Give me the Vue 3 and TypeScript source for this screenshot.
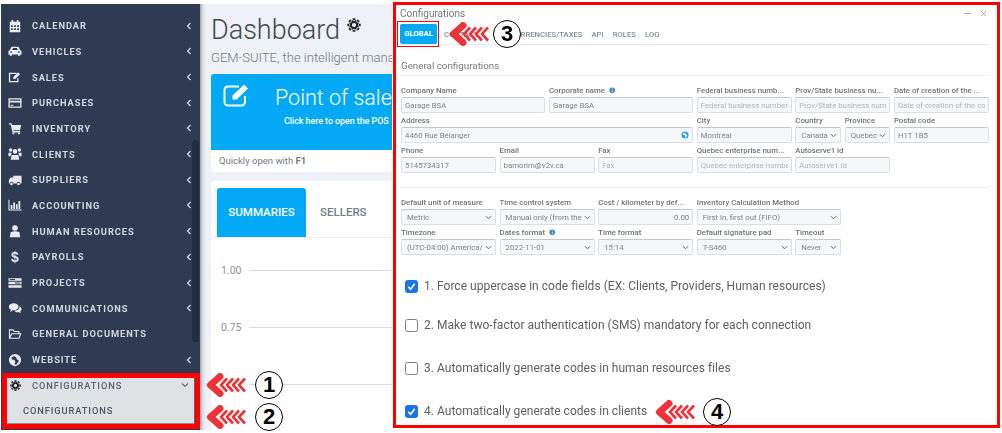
<script setup lang="ts">
function circle(cx: number, cy: number, r: number): string {
  return `M${cx - r} ${cy}a${r} ${r} 0 1 0 ${2 * r} 0a${r} ${r} 0 1 0 ${-2 * r} 0z`
}
function gear(): string {
  let d = ''
  const c = 8
  for (let i = 0; i < 8; i++) {
    const a = (i * Math.PI) / 4
    const p = (r: number, o: number) => `${(c + r * Math.cos(a + o)).toFixed(2)} ${(c + r * Math.sin(a + o)).toFixed(2)}`
    d += `M${p(5, -0.3)}L${p(7.8, -0.2)}L${p(7.8, 0.2)}L${p(5, 0.3)}z`
  }
  return d + circle(8, 8, 5.6) + circle(8, 8, 2.4)
}
const icons: Record<string, string> = {
  calendar: 'M2 3h2V1h2v2h4V1h2v2h2v12H2zM3.500 7v2h2V7zM7 7v2h2V7zM10.500 7v2h2V7zM3.500 10.500v2h2v-2zM7 10.500v2h2v-2zM10.500 10.500v2h2v-2z',
  car: 'M0.500 8l1.500-1 2-4h8l2 4 1.500 1v4h-1.500v1.500h-2.500V12H4.500v1.500H2V12H0.500zM4.800 6.800h6.400l-1-2.300H5.800zM2.500 8.500v1.500h2V8.500zM11.500 8.500v1.500h2V8.500z',
  edit: 'M1 3h8.500v1.500h-7v8h8V9.500H12V14H1zM6 8l5.500-5.500 2.300 2.300L8.300 10.300H6z',
  card: 'M0.500 2.500h15v11h-15zM2 7.500v4.500h12V7.500zM2 4v1.500h12V4zM3 10h3v1H3z',
  cart: 'M1 2.500h3l.6 2H15l-1.200 6H6.200l.3 1H14v1.500H5.200L3 4H1z' + circle(6.200, 14, 1.300) + circle(12.500, 14, 1.300),
  users: circle(8, 5, 2.600) + circle(3, 3.500, 2) + circle(13, 3.500, 2) + 'M4 9h8l.8 5.500H3.200zM0.500 6.500h3.300l.3 1.500-1.600 2.500H0.500zM15.500 6.500h-3.300l-.3 1.500 1.600 2.500h2z',
  truck: 'M1 8l2-3h3V3h9.500v9H14a2 2 0 0 0-4 0H6a2 2 0 0 0-4 0H1z' + circle(4, 12.500, 1.500) + circle(12, 12.500, 1.500),
  chart: 'M0.500 2h1.200v11h13.800v1.200H0.500zM3 8h2v4.500H3zM6 5h2v7.500H6zM9 7h2v5.500H9zM12 3.500h2v9h-2z',
  user: circle(8, 4.500, 3.200) + 'M3 9.500q5-2.500 10 0l1 5.500H2z',
  projects: 'M0.500 2.500h15v3h-15zM0.500 6.500h15v3h-15zM0.500 10.500h15v3h-15zM8 7.500v1h6v-1zM2 3.500v1h6v-1z',
  comments: 'M1 6.500C1 4 3.500 2.500 6.500 2.500S12 4 12 6.500 9.500 10.500 6.500 10.500l-1 0L2.500 12.500l.8-2.700C1.800 9 1 8 1 6.500zM13 6c1.500.8 2.500 2 2.500 3.500 0 1-.6 2-1.500 2.600l.6 2-2.600-1.400c-2 .3-3.600-.2-4.500-1.700 3.500 0 6-2 5.500-5z',
  folder: 'M1 2.500h5l1.500 2H13v2.500h2.500L13 13.500H1zM2.200 4v5.500L4 7h7.800V5.800H6.800L5.400 4zM4.700 8.200l-2.100 4h9.600l1.500-4z',
  globe: circle(8, 8, 7) + 'M7 3.500l-3 1.500.5 2.500 3 .5 1 2.500-1 2.500 2 .5 2-3 1-2-2.500-1.500-.5-2z',
  gear: gear()
}
type Row = { icon: string; label: string; dollar?: boolean; noArrow?: boolean }
const menu: Row[] = [
  { icon: 'calendar', label: 'CALENDAR' },
  { icon: 'car', label: 'VEHICLES' },
  { icon: 'edit', label: 'SALES' },
  { icon: 'card', label: 'PURCHASES' },
  { icon: 'cart', label: 'INVENTORY' },
  { icon: 'users', label: 'CLIENTS' },
  { icon: 'truck', label: 'SUPPLIERS' },
  { icon: 'chart', label: 'ACCOUNTING' },
  { icon: 'user', label: 'HUMAN RESOURCES' },
  { icon: '', label: 'PAYROLLS', dollar: true },
  { icon: 'projects', label: 'PROJECTS' },
  { icon: 'comments', label: 'COMMUNICATIONS' },
  { icon: 'folder', label: 'GENERAL DOCUMENTS', noArrow: true },
  { icon: 'globe', label: 'WEBSITE' }
]
type Field = { label: string; value?: string; ph?: string; span: number; select?: boolean; info?: boolean; globe?: boolean; right?: boolean; nl?: boolean }
const general: Field[] = [
  { label: 'Company Name', value: 'Garage BSA', span: 3 },
  { label: 'Corporate name', value: 'Garage BSA', span: 3, info: true },
  { label: 'Federal business numb...', ph: 'Federal business number', span: 2 },
  { label: 'Prov/State business nu...', ph: 'Prov/State business numl', span: 2 },
  { label: 'Date of creation of the ...', ph: 'Date of creation of the co', span: 2 },
  { label: 'Address', value: '4460 Rue Bélanger', span: 6, globe: true },
  { label: 'City', value: 'Montréal', span: 2 },
  { label: 'Country', value: 'Canada', span: 1, select: true },
  { label: 'Province', value: 'Quebec', span: 1, select: true },
  { label: 'Postal code', value: 'H1T 1B5', span: 2 },
  { label: 'Phone', value: '5145734317', span: 2 },
  { label: 'Email', value: 'bamorim@v2v.ca', span: 2 },
  { label: 'Fax', ph: 'Fax', span: 2 },
  { label: 'Quebec enterprise num...', ph: 'Quebec enterprise numbe', span: 2 },
  { label: 'Autoserve1 id', ph: 'Autoserve1 id', span: 2 }
]
const prefs: Field[] = [
  { label: 'Default unit of measure', value: 'Metric', span: 2, select: true },
  { label: 'Time control system', value: 'Manual only (from the', span: 2, select: true },
  { label: 'Cost / kilometer by def...', value: '0.00', span: 2, right: true },
  { label: 'Inventory Calculation Method', value: 'First in, first out (FIFO)', span: 3, select: true },
  { label: 'Timezone', value: '(UTC-04:00) America/I', span: 2, select: true, nl: true },
  { label: 'Dates format', value: '2022-11-01', span: 2, select: true, info: true },
  { label: 'Time format', value: '15:14', span: 2, select: true },
  { label: 'Default signature pad', value: 'T-S460', span: 2, select: true },
  { label: 'Timeout', value: 'Never', span: 1, select: true }
]
const checks = [
  { text: '1. Force uppercase in code fields (EX: Clients, Providers, Human resources)', on: true },
  { text: '2. Make two-factor authentication (SMS) mandatory for each connection', on: false },
  { text: '3. Automatically generate codes in human resources files', on: false },
  { text: '4. Automatically generate codes in clients', on: true }
]
const tabs = ['CONTACT', 'CURRENCIES/TAXES', 'API', 'ROLES', 'LOG']
const marks = [
  { n: 1, cls: 'm1' },
  { n: 2, cls: 'm2' },
  { n: 3, cls: 'm3' },
  { n: 4, cls: 'm4' }
]
const arrowX = [21, 27, 33, 39]
</script>

<template>
  <div class="page">
    <aside class="side">
      <div v-for="m in menu" :key="m.label" class="row">
        <span v-if="m.dollar" class="dollar">$</span>
        <svg v-else class="ico" viewBox="0 0 16 16"><path :d="icons[m.icon]" fill-rule="evenodd" /></svg>
        <span class="lbl">{{ m.label }}</span>
        <svg v-if="!m.noArrow" class="chev" viewBox="0 0 6 8"><path d="M4.500 1L1.500 4l3 3" /></svg>
      </div>
      <div class="cfg">
        <div class="cfg-row">
          <svg class="ico dark" viewBox="0 0 16 16"><path :d="icons.gear" fill-rule="evenodd" /></svg>
          <span class="lbl">CONFIGURATIONS</span>
          <svg class="chev down" viewBox="0 0 8 6"><path d="M1 1.500l3 3 3-3" /></svg>
        </div>
        <div class="cfg-sub">CONFIGURATIONS</div>
      </div>
      <div class="scroll"></div>
    </aside>

    <main class="main">
      <h1 class="title">Dashboard<svg class="title-gear" viewBox="0 0 16 16"><path :d="icons.gear" fill-rule="evenodd" /></svg></h1>
      <p class="sub">GEM-SUITE, the intelligent management software</p>
      <section class="pos">
        <div class="pos-top">
          <svg class="pos-ico" viewBox="0 0 28 24"><path d="M22 13v6a3.500 3.500 0 0 1-3.500 3.500H5A3.500 3.500 0 0 1 1.500 19V7A3.500 3.500 0 0 1 5 3.500h11" class="pos-line" /><path d="M9 17v-4.500L21 1l4.500 4.500L13.500 17z" class="pos-pen" /></svg>
          <div class="pos-txt">
            <div class="pos-head">Point of sale</div>
            <div class="pos-link">Click here to open the POS</div>
          </div>
        </div>
        <div class="pos-foot">Quickly open with <b>F1</b></div>
      </section>
      <section class="stats">
        <div class="stats-tabs">
          <span class="stab on">SUMMARIES</span>
          <span class="stab">SELLERS</span>
        </div>
        <div class="chart">
          <div class="cline"><span>1.00</span><i></i></div>
          <div class="cline"><span>0.75</span><i></i></div>
          <div class="cline"><span></span><i></i></div>
        </div>
      </section>
    </main>

    <section class="win">
      <header class="win-head">
        <span>Configurations</span>
        <span class="win-btns">
          <svg viewBox="0 0 8 8"><path d="M0 4h8" /></svg>
          <svg viewBox="0 0 8 8"><path d="M1 1l6 6M7 1L1 7" /></svg>
        </span>
      </header>
      <nav class="tabs">
        <span class="tab-on">GLOBAL</span>
        <span v-for="t in tabs" :key="t" class="tab">{{ t }}</span>
      </nav>
      <h2 class="sect">General configurations</h2>
      <div class="grid">
        <div v-for="f in general" :key="f.label" class="field" :class="'s' + f.span">
          <label>{{ f.label }}<svg v-if="f.info" class="info" viewBox="0 0 8 8"><circle cx="4" cy="4" r="3.500" /><path d="M3.500 3.300h1v3h-1zM3.500 1.700h1v1h-1z" /></svg></label>
          <div class="inp" :class="{ ph: f.ph, sel: f.select }">
            <span>{{ f.value || f.ph }}</span>
            <svg v-if="f.select" class="caret" viewBox="0 0 8 6"><path d="M1 1.500l3 3 3-3" /></svg>
            <svg v-if="f.globe" class="globe" viewBox="0 0 16 16"><path :d="icons.globe" fill-rule="evenodd" /></svg>
          </div>
        </div>
      </div>
      <div class="grid second">
        <div v-for="f in prefs" :key="f.label" class="field" :class="['s' + f.span, { nl: f.nl }]">
          <label>{{ f.label }}<svg v-if="f.info" class="info" viewBox="0 0 8 8"><circle cx="4" cy="4" r="3.500" /><path d="M3.500 3.300h1v3h-1zM3.500 1.700h1v1h-1z" /></svg></label>
          <div class="inp" :class="{ sel: f.select, right: f.right }">
            <span>{{ f.value }}</span>
            <svg v-if="f.select" class="caret" viewBox="0 0 8 6"><path d="M1 1.500l3 3 3-3" /></svg>
          </div>
        </div>
      </div>
      <div class="checks">
        <div v-for="c in checks" :key="c.text" class="check">
          <span class="box" :class="{ on: c.on }">
            <svg v-if="c.on" viewBox="0 0 12 12"><path d="M2.500 6.500l2.500 2.500 4.500-6" /></svg>
          </span>
          <span>{{ c.text }}</span>
        </div>
      </div>
      <div class="tab-mark"></div>
    </section>

    <div v-for="m in marks" :key="m.n" class="mark" :class="m.cls">
      <svg class="arrow" viewBox="0 0 42 24">
        <path class="head" d="M14 3.500L4.500 12l9.500 8.500" />
        <path v-for="x in arrowX" :key="x" class="tail" :d="`M${x} 5.500l-6 6.500 6 6.500`" />
      </svg>
      <span class="num">{{ m.n }}</span>
    </div>
  </div>
</template>

<style>
html, body { margin: 0; background: #fff; }
</style>

<style scoped>
.page {
  width: 1002px;
  height: 433px;
  position: relative;
  overflow: hidden;
  display: flex;
  align-items: flex-start;
  padding-top: 4px;
  box-sizing: border-box;
  font-family: Roboto, "Liberation Sans", sans-serif;
}
.side {
  width: 199px;
  height: 426px;
  margin-left: 1px;
  flex: none;
  box-sizing: border-box;
  background: #2e3b52;
  padding-top: 8.800px;
  position: relative;
  color: #dde1e8;
}
.row {
  height: 25.700px;
  display: flex;
  align-items: center;
  padding-left: 7px;
  filter: blur(0.3px);
}
.ico { width: 14px; height: 14px; flex: none; fill: #e8ebef; }
.dollar { width: 14px; flex: none; text-align: center; font: 700 14px "Liberation Sans", sans-serif; color: #e8ebef; }
.lbl {
  margin-left: 10px;
  font-size: 9.300px;
  font-weight: 700;
  letter-spacing: 0.950px;
  white-space: nowrap;
  color: #d3d8e0;
}
.chev { width: 6px; height: 8px; margin-left: auto; margin-right: 8px; flex: none; fill: none; stroke: #d9dde4; stroke-width: 1.200; }
.chev.down { width: 8px; height: 6px; margin-right: 6px; stroke: #666b75; }
.cfg {
  position: absolute;
  left: 1px;
  top: 369px;
  width: 198px;
  height: 56px;
  box-sizing: border-box;
  border: 5px solid #f00;
  background: #dfe2e5;
  box-shadow: inset -1px 0 0 #5a6474, inset 0 -1px 0 #8a909a;
}
.cfg-row {
  height: 14px;
  display: flex;
  align-items: center;
  padding-left: 3px;
  filter: blur(0.3px);
}
.cfg-row .ico { width: 11px; height: 11px; }
.cfg-row .lbl { margin-left: 11px; color: #5a6270; font-weight: 500; letter-spacing: 0.900px; }
.dark { fill: #15181d; }
.cfg-sub {
  margin: 12px 0 0 16px;
  height: 14px;
  line-height: 14px;
  font-size: 9.300px;
  font-weight: 500;
  letter-spacing: 0.900px;
  color: #4d5463;
  filter: blur(0.3px);
}
.scroll {
  position: absolute;
  left: 191px;
  top: 136px;
  width: 7px;
  height: 202px;
  border-radius: 4px;
  background: #222c3e;
}
.main {
  width: 192px;
  height: 426px;
  flex: none;
  box-sizing: border-box;
  background: linear-gradient(90deg, #a4a9b0 0, #dfe2e6 3px, #eef1f5 6px);
  padding: 0 0 0 11px;
  overflow: hidden;
}
.title {
  margin: 10px 0 0;
  font-size: 27px;
  font-weight: 300;
  line-height: 32px;
  color: #3f4750;
  white-space: nowrap;
  position: relative;
}
.title-gear { width: 14px; height: 14px; margin: 0 0 14px 7px; fill: #23262b; vertical-align: middle; }
.sub {
  margin: 3px 0 0;
  font-size: 13px;
  font-weight: 300;
  line-height: 18px;
  color: #6f7985;
  white-space: nowrap;
}
.pos {
  margin-top: 7px;
  width: 260px;
  height: 98px;
  background: #fff;
  border-radius: 3px;
  overflow: hidden;
}
.pos-top {
  height: 76px;
  background: #03a9f4;
  display: flex;
  color: #fff;
}
.pos-ico { width: 28px; height: 24px; margin: 9px 0 0 12px; flex: none; }
.pos-line { fill: none; stroke: #fff; stroke-width: 2; }
.pos-pen { fill: #fff; stroke: #03a9f4; stroke-width: 1; }
.pos-txt { margin-left: 24px; }
.pos-head { font-size: 21.500px; font-weight: 300; line-height: 30px; margin-top: 9px; white-space: nowrap; }
.pos-link { font-size: 8.800px; font-weight: 500; margin: 1px 0 0 9px; white-space: nowrap; line-height: 14px; }
.pos-foot { padding-left: 8px; line-height: 22px; font-size: 9.500px; color: #74797f; }
.pos-foot b { font-weight: 700; }
.stats {
  margin-top: 9px;
  width: 260px;
  height: 260px;
  background: #fff;
  border-radius: 3px;
}
.stats-tabs {
  display: flex;
  height: 57px;
  padding: 7px 0 0 6px;
  box-sizing: border-box;
  border-bottom: 1px solid #eee;
}
.stab {
  width: 89px;
  height: 49px;
  line-height: 49px;
  text-align: center;
  font-size: 11.500px;
  font-weight: 500;
  color: #6f7f88;
  white-space: nowrap;
  flex: none;
}
.stab + .stab { width: auto; margin-left: 14px; }
.stab.on { background: #03a9f4; color: #fff; border-radius: 3px 3px 0 0; }
.chart { padding: 4px 0 0 10px; }
.cline {
  height: 57px;
  display: flex;
  align-items: center;
  font-size: 10.500px;
  color: #8a8f95;
}
.cline span { width: 28px; flex: none; }
.cline i { flex: 1; height: 1px; background: #dcdcdc; }
.win {
  position: absolute;
  left: 393px;
  top: 2px;
  width: 607px;
  height: 426px;
  box-sizing: border-box;
  border: 3px solid #f00;
  background: #fff;
  padding: 0 7px 0 4px;
  color: #6e7278;
}
.win-head {
  height: 16px;
  display: flex;
  justify-content: space-between;
  align-items: center;
  font-size: 10px;
  margin-bottom: 3px;
  color: #74787d;
  filter: blur(0.3px);
}
.win-btns { display: flex; gap: 9px; align-items: center; margin-right: 3px; }
.win-btns svg { width: 7px; height: 7px; fill: none; stroke: #a5a8ac; stroke-width: 1; }
.tabs {
  display: flex;
  align-items: flex-end;
  height: 21px;
  box-sizing: border-box;
  border-bottom: 1px solid #e8e9eb;
  font-size: 7.700px;
  font-weight: 500;
  color: #78909c;
  line-height: 19px;
  filter: blur(0.3px);
}
.tab-on {
  width: 37px;
  height: 20px;
  line-height: 20px;
  margin-left: 0;
  text-align: center;
  background: #03a9f4;
  color: #fff;
  font-weight: 700;
  border-radius: 2px;
  flex: none;
}
.tab { margin-left: 9px; white-space: nowrap; }
.tab:nth-child(2) { margin-left: 7px; width: 57.500px; overflow: hidden; }
.sect {
  margin: 0;
  height: 31px;
  padding: 11px 0 0 1px;
  line-height: 20px;
  font-size: 9.800px;
  font-weight: 400;
  color: #74787d;
  border-bottom: 1px solid #eef0f1;
  box-sizing: border-box;
  filter: blur(0.3px);
}
.grid {
  display: grid;
  grid-template-columns: repeat(12, 1fr);
  column-gap: 3.500px;
  row-gap: 2px;
  width: 588px;
  margin: 9px 0 0 1px;
  filter: blur(0.3px);
}
.second {
  border-top: 1px solid #eef0f1;
  margin-top: 14px;
  padding-top: 9px;
}
.s1 { grid-column: span 1; }
.s2 { grid-column: span 2; }
.s3 { grid-column: span 3; }
.s6 { grid-column: span 6; }
.nl { grid-column: 1 / span 2; }
.field { min-width: 0; }
.field label {
  display: block;
  height: 12px;
  line-height: 12px;
  font-size: 7.800px;
  font-weight: 500;
  color: #6f7379;
  white-space: nowrap;
  overflow: hidden;
}
.info { width: 6.500px; height: 6.500px; margin-left: 4px; fill: #3b82c4; }
.info path { fill: #fff; }
.inp {
  height: 16px;
  box-sizing: border-box;
  border: 1px solid #dcdfe2;
  border-top-color: #c6c9cc;
  border-radius: 2px;
  background: #f6f7f8;
  display: flex;
  align-items: center;
  padding: 0 3px;
  font-size: 7.800px;
  color: #7d8288;
  white-space: nowrap;
  overflow: hidden;
  position: relative;
}
.inp span { overflow: hidden; flex: 1; }
.inp.ph { color: #b0b4b8; }
.inp.sel { padding-left: 5px; }
.inp.right span { text-align: right; }
.caret { width: 7px; height: 5px; flex: none; fill: none; stroke: #5b6066; stroke-width: 1.200; margin-left: 2px; }
.globe { width: 8px; height: 8px; flex: none; fill: #1fa2e8; }
.checks { margin: 24px 0 0 5px; filter: blur(0.25px); }
.check {
  display: flex;
  align-items: center;
  height: 14px;
  font-size: 12px;
  letter-spacing: 0.030px;
  color: #5c6064;
  white-space: nowrap;
}
.check + .check { margin-top: 25px; }
.check:nth-child(3), .check:nth-child(4) { margin-top: 29px; }
.box {
  width: 13px;
  height: 13px;
  box-sizing: border-box;
  border: 1px solid #7c7f83;
  border-radius: 2.500px;
  margin-right: 6px;
  flex: none;
  background: #fff;
}
.box.on { background: #1a73e8; border-color: #1a73e8; }
.box svg { display: block; width: 11px; height: 11px; fill: none; stroke: #fff; stroke-width: 1.800; }
.tab-mark {
  position: absolute;
  left: 1px;
  top: 16px;
  width: 42px;
  height: 26px;
  box-sizing: border-box;
  border: 1.500px solid #f00;
}
.mark {
  position: absolute;
  display: flex;
  align-items: center;
}
.m1 { left: 206px; top: 371px; }
.m2 { left: 206px; top: 403px; }
.m3 { left: 449px; top: 20px; }
.m4 { left: 655px; top: 398px; }
.arrow { width: 42px; height: 24px; flex: none; }
.head { fill: none; stroke: #ee3239; stroke-width: 7; stroke-linejoin: round; stroke-linecap: round; }
.tail { fill: none; stroke: #ee3239; stroke-width: 2.600; }
.num {
  width: 28px;
  height: 28px;
  margin-left: 7px;
  box-sizing: border-box;
  border: 1.500px solid #000;
  border-radius: 50%;
  background: #fff;
  color: #000;
  text-align: center;
  font: 700 22px/25px "Liberation Sans", sans-serif;
}
.m3 .num { margin-left: 2px; }
.m4 .num { margin-left: 6px; }
</style>
